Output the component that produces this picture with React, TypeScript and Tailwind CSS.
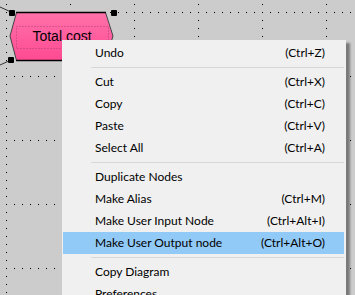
const font = { fontFamily: 'Lato, "Noto Sans", sans-serif' }

type Item = { label: string; shortcut?: string; active?: boolean } | "sep"

const items: Item[] = [
  { label: "Undo", shortcut: "(Ctrl+Z)" },
  "sep",
  { label: "Cut", shortcut: "(Ctrl+X)" },
  { label: "Copy", shortcut: "(Ctrl+C)" },
  { label: "Paste", shortcut: "(Ctrl+V)" },
  { label: "Select All", shortcut: "(Ctrl+A)" },
  "sep",
  { label: "Duplicate Nodes" },
  { label: "Make Alias", shortcut: "(Ctrl+M)" },
  { label: "Make User Input Node", shortcut: "(Ctrl+Alt+I)" },
  { label: "Make User Output node", shortcut: "(Ctrl+Alt+O)", active: true },
  "sep",
  { label: "Copy Diagram" },
  { label: "Preferences" },
]

function GridDots() {
  return (
    <svg className="absolute inset-0" width="355" height="295">
      <defs>
        <pattern id="row" x="6" y="12" width="8" height="64" patternUnits="userSpaceOnUse">
          <rect x="0" y="0" width="1" height="1" fill="#000" />
        </pattern>
        <pattern id="col" x="6" y="4" width="64" height="8" patternUnits="userSpaceOnUse">
          <rect x="0" y="0" width="1" height="1" fill="#000" />
        </pattern>
      </defs>
      <rect width="355" height="295" fill="url(#row)" />
      <rect width="355" height="295" fill="url(#col)" />
    </svg>
  )
}

function Node() {
  return (
    <div className="absolute left-0 top-0 w-[120px] h-[70px]">
      <svg className="absolute inset-0" width="120" height="70">
        <defs>
          <linearGradient id="pink" x1="0" y1="0" x2="0" y2="1">
            <stop offset="0" stopColor="#ff72aa" />
            <stop offset="1" stopColor="#ff4a92" />
          </linearGradient>
        </defs>
        <line x1="0" y1="7" x2="11" y2="12" stroke="#333" strokeWidth="1" />
        <line x1="0" y1="65" x2="11" y2="60" stroke="#333" strokeWidth="1" />
        <polygon
          points="16.5,12.5 105.5,12.5 113,36 105.5,60.5 16.5,60.5 10,36"
          fill="url(#pink)"
          stroke="#444"
          strokeWidth="1"
        />
        <line x1="16" y1="12.5" x2="106" y2="12.5" stroke="#000" strokeWidth="1.5" />
        <line x1="16" y1="60.5" x2="106" y2="60.5" stroke="#000" strokeWidth="1.5" />
        <rect x="16.5" y="26.5" width="92" height="22" fill="none" stroke="#b0406e" strokeDasharray="1 2" />
        <rect x="9" y="10" width="6" height="6" rx="1" fill="#000" />
        <rect x="111" y="10" width="6" height="6" rx="1" fill="#000" />
        <rect x="8" y="57" width="6" height="6" rx="1" fill="#000" />
      </svg>
      <div
        className="absolute left-[16px] top-[26px] w-[92px] text-center text-[14px] leading-[20px] text-black"
        style={{ fontFamily: '"Liberation Sans", Arial, sans-serif' }}
      >
        Total cost
      </div>
    </div>
  )
}

export default function App() {
  return (
    <div className="relative w-[355px] h-[295px] overflow-hidden bg-[#cccccc]">
      <GridDots />
      <Node />

      {/* context menu */}
      <div
        className="absolute left-[62px] top-[40px] w-[284px] bg-[#f0f0f0] pt-[2px] pb-2 shadow-[4px_3px_2px_rgba(0,0,0,0.4)] text-[12px] text-black"
        style={font}
      >
        {items.map((it, i) =>
          it === "sep" ? (
            <div key={i} className="h-[7px] flex items-center pl-[29px] pr-[2px]">
              <div className="h-px w-full bg-[#d7d7d7]" />
            </div>
          ) : (
            <div
              key={i}
              className={`ml-[1px] mr-[2px] h-[22px] flex items-center justify-between pl-[32px] pr-[19px] ${
                it.active ? "bg-[#91c9f7]" : ""
              }`}
            >
              <span>{it.label}</span>
              <span>{it.shortcut}</span>
            </div>
          )
        )}
      </div>
    </div>
  )
}
